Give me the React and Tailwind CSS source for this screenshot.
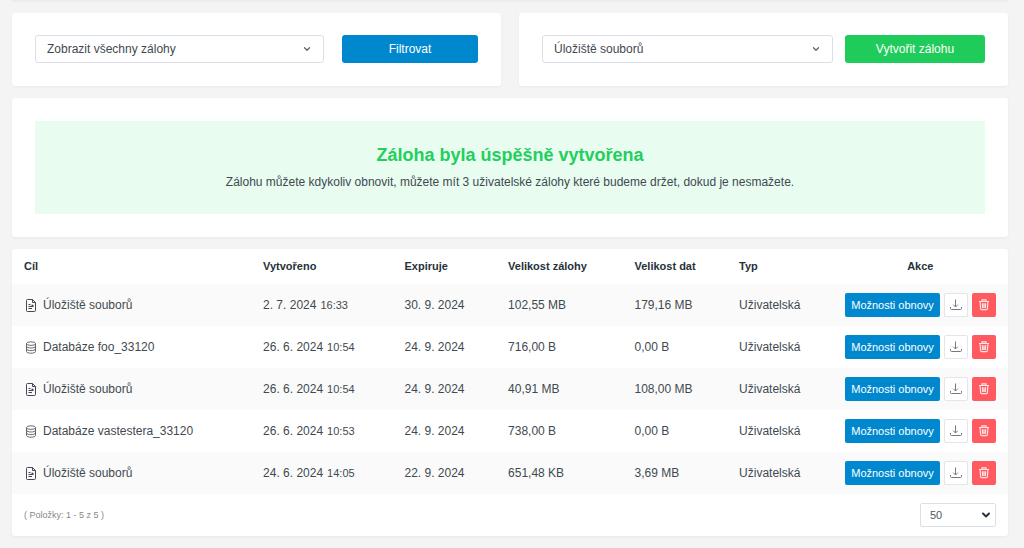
import { ChevronDown } from "lucide-react";

const rows = [
  { kind: "files", target: "Úložiště souborů", date: "2. 7. 2024", time: "16:33", expires: "30. 9. 2024", backup: "102,55 MB", data: "179,16 MB" },
  { kind: "db", target: "Databáze foo_33120", date: "26. 6. 2024", time: "10:54", expires: "24. 9. 2024", backup: "716,00 B", data: "0,00 B" },
  { kind: "files", target: "Úložiště souborů", date: "26. 6. 2024", time: "10:54", expires: "24. 9. 2024", backup: "40,91 MB", data: "108,00 MB" },
  { kind: "db", target: "Databáze vastestera_33120", date: "26. 6. 2024", time: "10:53", expires: "24. 9. 2024", backup: "738,00 B", data: "0,00 B" },
  { kind: "files", target: "Úložiště souborů", date: "24. 6. 2024", time: "14:05", expires: "22. 9. 2024", backup: "651,48 KB", data: "3,69 MB" },
];

function FileIcon() {
  return (
    <svg aria-hidden="true" viewBox="0 0 10 13" className="h-[13px] w-[10px] shrink-0" fill="none" stroke="#4a4552" strokeWidth="1">
      <path d="M1.5 0.5H6.5L9.5 3.5V11.5Q9.5 12.5 8.5 12.5H1.5Q0.5 12.5 0.5 11.5V1.5Q0.5 0.5 1.5 0.5Z" />
      <path d="M6.5 0.5V3.5H9.5" />
      <path d="M2.5 5.5H4.5M2.5 7.5H7.5M2.5 9.5H6M5.5 6.3H7.5" strokeWidth="1.2" />
    </svg>
  );
}

function DatabaseIcon() {
  return (
    <svg aria-hidden="true" viewBox="0 0 10 13" className="h-[13px] w-[10px] shrink-0" fill="none" stroke="#5c5762" strokeWidth="0.9">
      <ellipse cx="5" cy="2.6" rx="4.5" ry="1.8" />
      <path d="M0.5 2.6V10.4C0.5 12.8 9.5 12.8 9.5 10.4V2.6" />
      <path d="M0.5 5.2C0.5 7.6 9.5 7.6 9.5 5.2M0.5 7.8C0.5 10.2 9.5 10.2 9.5 7.8" />
    </svg>
  );
}

function DownloadIcon() {
  return (
    <svg aria-hidden="true" viewBox="0 0 12 12" className="size-3" fill="none" stroke="#74787f" strokeWidth="1">
      <path d="M5.5 0.5V8M3.2 5.7L5.5 8L7.8 5.7M0.5 8V9.5Q0.5 10.5 1.5 10.5H10.5Q11.5 10.5 11.5 9.5V8" />
    </svg>
  );
}

function TrashIcon() {
  return (
    <svg aria-hidden="true" viewBox="0 0 12 12" className="size-3" fill="none" stroke="#ffe3e3" strokeWidth="1.2">
      <path d="M1 2.5H11M4 2.2V0.8H8V2.2M2.1 2.5L2.6 9.8Q2.7 10.6 3.5 10.6H8.5Q9.3 10.6 9.4 9.8L9.9 2.5M4.4 4.2L4.6 9M6 4.2V9M7.6 4.2L7.4 9" />
    </svg>
  );
}

function SelectBox({ label, option }) {
  return (
    <div className="relative min-w-0 flex-1">
      <select
        aria-label={label}
        className="block h-7 w-full appearance-none rounded-[3px] border border-[#dcdfe9] bg-white pr-8 pl-[11px] text-[12px] leading-4 text-[#3f4a50]"
      >
        <option>{option}</option>
      </select>
      <ChevronDown aria-hidden="true" className="pointer-events-none absolute top-[9px] right-3 size-[10px] text-[#5b6468]" strokeWidth={3} />
    </div>
  );
}

const card = "rounded-[3px] bg-white shadow-[0_1px_3px_rgba(0,0,0,0.05)]";

export default function App() {
  return (
    <main className="min-h-screen bg-[#f4f4f4] px-4 pb-3 pl-3 font-['Liberation_Sans',Arial,sans-serif] text-[12px] leading-4 text-[#3f4a50]">
      <div className="h-px bg-[#eaeaea] shadow-[0_1px_2px_rgba(0,0,0,0.04)]" />
      <div className="mt-3 grid grid-cols-2 gap-[18px]">
        <form className={`${card} flex gap-[18px] px-[23px] pt-[22px] pb-[23px]`}>
          <SelectBox label="Zobrazit zálohy" option="Zobrazit všechny zálohy" />
          <button type="button" className="h-7 w-[136px] rounded-[3px] bg-[#0088ce] text-white">
            Filtrovat
          </button>
        </form>
        <form className={`${card} flex gap-3 px-[23px] pt-[22px] pb-[23px]`}>
          <SelectBox label="Cíl zálohy" option="Úložiště souborů" />
          <button type="button" className="h-7 w-[140px] rounded-[3px] bg-[#1fcb5a] text-white">
            Vytvořit zálohu
          </button>
        </form>
      </div>

      <section className={`${card} mt-3 px-[23px] py-[23px]`}>
        <div className="bg-[#e9fcf0] pt-[22px] pb-[23px] text-center">
          <h1 className="text-[18px] leading-6 font-bold text-[#22cf5d]">Záloha byla úspěšně vytvořena</h1>
          <p className="mt-1.5 leading-[18px]">
            Zálohu můžete kdykoliv obnovit, můžete mít 3 uživatelské zálohy které budeme držet, dokud je nesmažete.
          </p>
        </div>
      </section>

      <section className={`${card} mt-3`}>
        <table className="w-full table-fixed text-left">
          <thead>
            <tr className="h-[35px] text-[11px] text-[#26323a] [&>th]:px-3 [&>th]:pb-0.5 [&>th]:font-bold">
              <th scope="col" className="w-[24%]">Cíl</th>
              <th scope="col" className="w-[14.2%]">Vytvořeno</th>
              <th scope="col" className="w-[10.4%]">Expiruje</th>
              <th scope="col" className="w-[12.7%]">Velikost zálohy</th>
              <th scope="col" className="w-[10.5%]">Velikost dat</th>
              <th scope="col" className="w-[10.6%]">Typ</th>
              <th scope="col" className="text-center">Akce</th>
            </tr>
          </thead>
          <tbody>
            {rows.map((row, i) => (
              <tr key={i} className="h-[42px] whitespace-nowrap odd:bg-[#fafafa] [&>td]:px-3">
                <td>
                  <span className="flex items-center gap-[7px] pl-0.5">
                    {row.kind === "files" ? <FileIcon /> : <DatabaseIcon />}
                    {row.target}
                  </span>
                </td>
                <td>
                  <span className="flex items-baseline gap-1">
                    {row.date}
                    <span className="text-[11px]">{row.time}</span>
                  </span>
                </td>
                <td>{row.expires}</td>
                <td>{row.backup}</td>
                <td>{row.data}</td>
                <td>Uživatelská</td>
                <td>
                  <div className="flex justify-end gap-1">
                    <button type="button" className="h-6 w-[95px] rounded-[2px] bg-[#0088ce] text-[11px] text-white">
                      Možnosti obnovy
                    </button>
                    <button type="button" aria-label="Stáhnout" className="flex size-6 items-center justify-center rounded-[2px] border border-[#e4e5ea] bg-white">
                      <DownloadIcon />
                    </button>
                    <button type="button" aria-label="Smazat" className="flex size-6 items-center justify-center rounded-[2px] bg-[#ff5a5f]">
                      <TrashIcon />
                    </button>
                  </div>
                </td>
              </tr>
            ))}
          </tbody>
        </table>
        <div className="flex h-[42px] items-center justify-between px-3">
          <span className="text-[9px] text-[#84898e]">( Položky: 1 - 5 z 5 )</span>
          <div className="relative">
            <select aria-label="Počet položek" className="block h-6 w-[76px] appearance-none rounded-[2px] border border-[#dcdfe9] bg-white pl-[9px] text-[11px] text-[#4f565c]">
              <option>50</option>
            </select>
            <ChevronDown aria-hidden="true" className="pointer-events-none absolute top-[6px] right-1 size-3 text-[#26323a]" strokeWidth={4} />
          </div>
        </div>
      </section>
    </main>
  );
}
